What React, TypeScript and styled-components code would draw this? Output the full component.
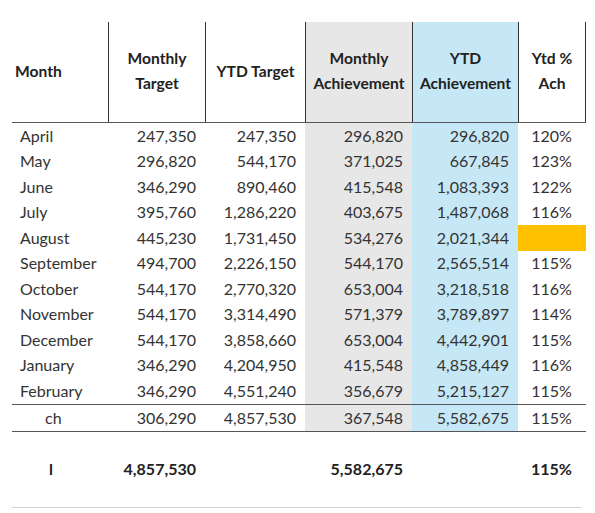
import styled, { createGlobalStyle } from "styled-components";

const GlobalStyle = createGlobalStyle`
    body {
        margin: 0;
        background: #ffffff;
        font-family: "Lato", "Noto Sans", sans-serif;
        color: #333333;
    }
`;

const COLS = "96px 97px 100px 107px 106px 68px";

const Sheet = styled.div`
    padding: 22px 0 0 12px;
    width: 574px;
`;

const HeaderRow = styled.div`
    display: grid;
    grid-template-columns: ${COLS};
    height: 100px;
    border-bottom: 1px solid #555555;
`;

const HeadCell = styled.div<{ $bg?: string; $first?: boolean; $last?: boolean; $left?: boolean }>`
    display: flex;
    align-items: center;
    justify-content: ${(p) => (p.$left ? "flex-start" : "center")};
    padding-left: ${(p) => (p.$left ? "3px" : "0")};
    padding-bottom: 2px;
    text-align: center;
    font-weight: 700;
    font-size: 15.6px;
    line-height: 25px;
    color: #222222;
    background: ${(p) => p.$bg || "transparent"};
    border-left: ${(p) => (p.$first ? "none" : "1px solid #333333")};
    border-right: ${(p) => (p.$last ? "1px solid #333333" : "none")};
`;

const Row = styled.div<{ $h?: number; $lined?: boolean }>`
    display: grid;
    grid-template-columns: ${COLS};
    height: ${(p) => p.$h || 25.5}px;
    border-top: ${(p) => (p.$lined ? "1px solid #555555" : "none")};
    border-bottom: ${(p) => (p.$lined ? "1px solid #555555" : "none")};
`;

const Cell = styled.div<{ $bg?: string; $align?: string; $bold?: boolean; $indent?: number }>`
    display: flex;
    align-items: center;
    justify-content: ${(p) => p.$align || "flex-end"};
    padding: 0 9px 1px ${(p) => p.$indent ?? 8}px;
    font-size: 16px;
    font-weight: ${(p) => (p.$bold ? 700 : 400)};
    color: ${(p) => (p.$bold ? "#222222" : "#333333")};
    background: ${(p) => p.$bg || "transparent"};
    white-space: nowrap;
`;

const TotalRow = styled(Row)`
    height: 75px;
    margin-right: 4px;
    border-bottom: 1px solid #d4d4d4;
`;

const GRAY = "#e7e7e7";
const BLUE = "#c6e8f6";
const ORANGE = "#ffc000";

const rows: [string, string, string, string, string, string][] = [
    ["April", "247,350", "247,350", "296,820", "296,820", "120%"],
    ["May", "296,820", "544,170", "371,025", "667,845", "123%"],
    ["June", "346,290", "890,460", "415,548", "1,083,393", "122%"],
    ["July", "395,760", "1,286,220", "403,675", "1,487,068", "116%"],
    ["August", "445,230", "1,731,450", "534,276", "2,021,344", ""],
    ["September", "494,700", "2,226,150", "544,170", "2,565,514", "115%"],
    ["October", "544,170", "2,770,320", "653,004", "3,218,518", "116%"],
    ["November", "544,170", "3,314,490", "571,379", "3,789,897", "114%"],
    ["December", "544,170", "3,858,660", "653,004", "4,442,901", "115%"],
    ["January", "346,290", "4,204,950", "415,548", "4,858,449", "116%"],
    ["February", "346,290", "4,551,240", "356,679", "5,215,127", "115%"],
];

export default function App() {
    return (
        <Sheet>
            <GlobalStyle />
            <HeaderRow>
                <HeadCell $first $left>Month</HeadCell>
                <HeadCell>Monthly<br />Target</HeadCell>
                <HeadCell>YTD Target</HeadCell>
                <HeadCell $bg={GRAY}>Monthly<br />Achievement</HeadCell>
                <HeadCell $bg={BLUE}>YTD<br />Achievement</HeadCell>
                <HeadCell $last>Ytd %<br />Ach</HeadCell>
            </HeaderRow>
            {rows.map((r) => (
                <Row key={r[0]}>
                    <Cell $align="flex-start">{r[0]}</Cell>
                    <Cell>{r[1]}</Cell>
                    <Cell>{r[2]}</Cell>
                    <Cell $bg={GRAY}>{r[3]}</Cell>
                    <Cell $bg={BLUE}>{r[4]}</Cell>
                    <Cell $align="center" $bg={r[5] === "" ? ORANGE : undefined}>{r[5]}</Cell>
                </Row>
            ))}
            <Row $lined $h={26}>
                <Cell $align="flex-start" $indent={33}>ch</Cell>
                <Cell>306,290</Cell>
                <Cell>4,857,530</Cell>
                <Cell $bg={GRAY}>367,548</Cell>
                <Cell $bg={BLUE}>5,582,675</Cell>
                <Cell $align="center">115%</Cell>
            </Row>
            <TotalRow>
                <Cell $align="flex-start" $bold $indent={37}>l</Cell>
                <Cell $bold>4,857,530</Cell>
                <Cell />
                <Cell $bold>5,582,675</Cell>
                <Cell />
                <Cell $align="center" $bold>115%</Cell>
            </TotalRow>
        </Sheet>
    );
}
